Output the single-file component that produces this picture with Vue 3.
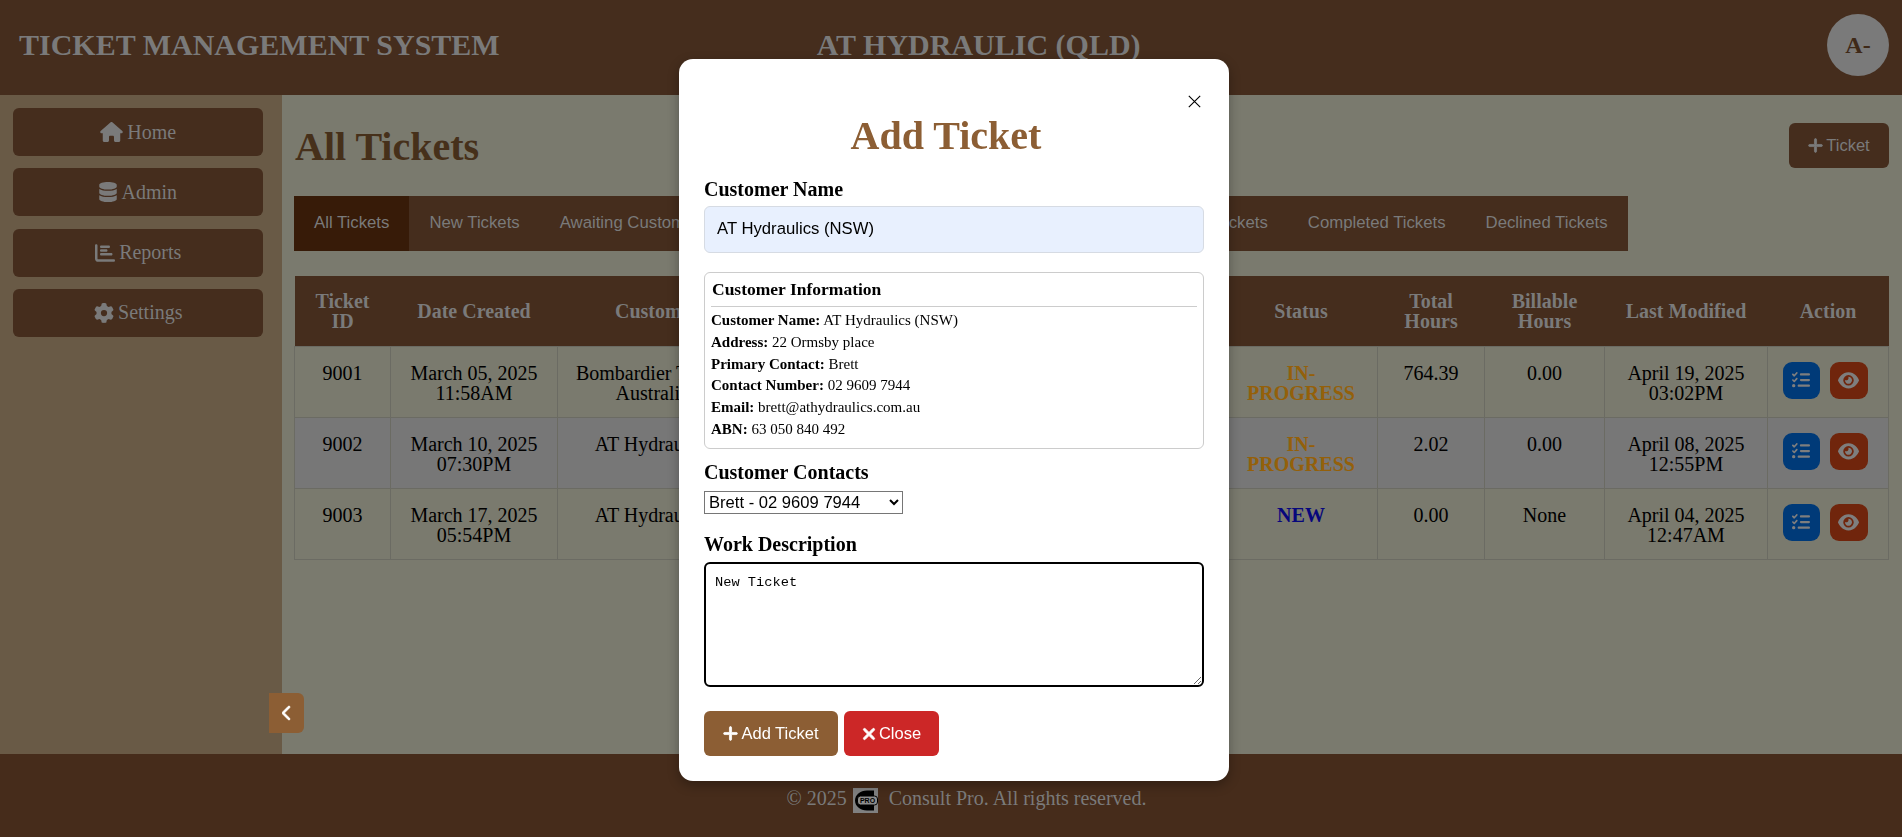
<script setup>
const paths = {
  house: 'M575.8 255.5c0 18-15 32.1-32 32.1h-32l.7 160.2c0 2.7-.2 5.4-.5 8.1V472c0 22.1-17.9 40-40 40H456c-1.1 0-2.2 0-3.3-.1c-1.4 .1-2.8 .1-4.2 .1H416 392c-22.1 0-40-17.9-40-40V448 384c0-17.7-14.3-32-32-32H256c-17.7 0-32 14.3-32 32v64 24c0 22.1-17.9 40-40 40H160 128.1c-1.5 0-3-.1-4.5-.2c-1.2 .1-2.4 .2-3.6 .2H104c-22.1 0-40-17.9-40-40V360c0-.9 0-1.9 .1-2.8V287.6H32c-18 0-32-14-32-32.1c0-9 3-17 10-24L266.4 8c7-7 15-8 22-8s15 2 21 7L564.8 231.5c8 7 12 15 11 24z',
  database: 'M448 73.143v45.714C448 159.143 347.667 192 224 192S0 159.143 0 118.857V73.143C0 32.857 100.333 0 224 0s224 32.857 224 73.143zM448 176v102.857C448 319.143 347.667 352 224 352S0 319.143 0 278.857V176c48.125 33.143 136.208 48.572 224 48.572S399.874 209.143 448 176zm0 160v102.857C448 479.143 347.667 512 224 512S0 479.143 0 438.857V336c48.125 33.143 136.208 48.572 224 48.572S399.874 369.143 448 336z',
  chart: 'M32 32c17.7 0 32 14.3 32 32V400c0 8.8 7.2 16 16 16H480c17.7 0 32 14.3 32 32s-14.3 32-32 32H80c-44.2 0-80-35.8-80-80V64C0 46.3 14.3 32 32 32zm96 64c0-17.7 14.3-32 32-32l192 0c17.7 0 32 14.3 32 32s-14.3 32-32 32l-192 0c-17.7 0-32-14.3-32-32zm32 64l128 0c17.7 0 32 14.3 32 32s-14.3 32-32 32l-128 0c-17.7 0-32-14.3-32-32s14.3-32 32-32zm0 96H416c17.7 0 32 14.3 32 32s-14.3 32-32 32H160c-17.7 0-32-14.3-32-32s14.3-32 32-32z',
  gear: 'M495.9 166.6c3.2 8.7 .5 18.4-6.4 24.6l-43.3 39.4c1.1 8.3 1.7 16.8 1.7 25.4s-.6 17.1-1.7 25.4l43.3 39.4c6.9 6.2 9.6 15.9 6.4 24.6c-4.4 11.9-9.7 23.3-15.8 34.3l-4.7 8.1c-6.6 11-14 21.4-22.1 31.2c-5.9 7.2-15.7 9.6-24.5 6.8l-55.7-17.7c-13.4 10.3-28.2 18.9-44 25.4l-12.5 57.1c-2 9.1-9 16.3-18.2 17.8c-13.8 2.3-28 3.5-42.5 3.5s-28.7-1.2-42.5-3.5c-9.2-1.5-16.2-8.7-18.2-17.8l-12.5-57.1c-15.8-6.5-30.6-15.1-44-25.4L83.1 425.9c-8.8 2.8-18.6 .3-24.5-6.8c-8.1-9.8-15.5-20.2-22.1-31.2l-4.7-8.1c-6.1-11-11.4-22.4-15.8-34.3c-3.2-8.7-.5-18.4 6.4-24.6l43.3-39.4C64.6 273.1 64 264.6 64 256s.6-17.1 1.7-25.4L22.4 191.2c-6.9-6.2-9.6-15.9-6.4-24.6c4.4-11.9 9.7-23.3 15.8-34.3l4.7-8.1c6.6-11 14-21.4 22.1-31.2c5.9-7.2 15.7-9.6 24.5-6.8l55.7 17.7c13.4-10.3 28.2-18.9 44-25.4l12.5-57.1c2-9.1 9-16.3 18.2-17.8C227.3 1.2 241.5 0 256 0s28.7 1.2 42.5 3.5c9.2 1.5 16.2 8.7 18.2 17.8l12.5 57.1c15.8 6.5 30.6 15.1 44 25.4l55.7-17.7c8.8-2.8 18.6-.3 24.5 6.8c8.1 9.8 15.5 20.2 22.1 31.2l4.7 8.1c6.1 11 11.4 22.4 15.8 34.3zM256 336a80 80 0 1 0 0-160 80 80 0 1 0 0 160z',
  plus: 'M256 80c0-17.7-14.3-32-32-32s-32 14.3-32 32V224H48c-17.7 0-32 14.3-32 32s14.3 32 32 32H192V432c0 17.7 14.3 32 32 32s32-14.3 32-32V288H400c17.7 0 32-14.3 32-32s-14.3-32-32-32H256V80z',
  xmark: 'M342.6 150.6c12.5-12.5 12.5-32.8 0-45.3s-32.8-12.5-45.3 0L192 210.7 86.6 105.4c-12.5-12.5-32.8-12.5-45.3 0s-12.5 32.8 0 45.3L146.7 256 41.4 361.4c-12.5 12.5-12.5 32.8 0 45.3s32.8 12.5 45.3 0L192 301.3 297.4 406.6c12.5 12.5 32.8 12.5 45.3 0s12.5-32.8 0-45.3L237.3 256 342.6 150.6z',
  list: 'M152.1 38.2c9.9 8.9 10.7 24 1.8 33.9l-72 80c-4.4 4.9-10.6 7.8-17.2 7.9s-12.9-2.4-17.6-7L7 113C-2.3 103.6-2.3 88.4 7 79s24.6-9.4 33.9 0l22.1 22.1 55.1-61.2c8.9-9.9 24-10.7 33.9-1.8zm0 160c9.9 8.9 10.7 24 1.8 33.9l-72 80c-4.4 4.9-10.6 7.8-17.2 7.9s-12.9-2.4-17.6-7L7 273c-9.4-9.4-9.4-24.6 0-33.9s24.6-9.4 33.9 0l22.1 22.1 55.1-61.2c8.9-9.9 24-10.7 33.9-1.8zM224 96c0-17.7 14.3-32 32-32H480c17.7 0 32 14.3 32 32s-14.3 32-32 32H256c-17.7 0-32-14.3-32-32zm0 160c0-17.7 14.3-32 32-32H480c17.7 0 32 14.3 32 32s-14.3 32-32 32H256c-17.7 0-32-14.3-32-32zM160 416c0-17.7 14.3-32 32-32H480c17.7 0 32 14.3 32 32s-14.3 32-32 32H192c-17.7 0-32-14.3-32-32zM48 368a48 48 0 1 1 0 96 48 48 0 1 1 0-96z',
  eye: 'M288 32c-80.8 0-145.5 36.8-192.6 80.6C48.6 156 17.3 208 2.5 243.7c-3.3 7.9-3.3 16.7 0 24.6C17.3 304 48.6 356 95.4 399.4C142.5 443.2 207.2 480 288 480s145.5-36.8 192.6-80.6c46.8-43.5 78.1-95.4 93-131.1c3.3-7.9 3.3-16.7 0-24.6c-14.9-35.7-46.2-87.7-93-131.1C433.5 68.8 368.8 32 288 32zM144 256a144 144 0 1 1 288 0 144 144 0 1 1 -288 0zm144-64c0 35.3-28.7 64-64 64c-7.1 0-13.9-1.2-20.3-3.3c-5.5-1.8-11.9 1.6-11.7 7.4c.3 6.9 1.3 13.8 3.2 20.7c13.7 51.2 66.4 81.6 117.6 67.9s81.6-66.4 67.9-117.6c-11.1-41.5-47.8-69.4-88.6-71.1c-5.8-.2-9.2 6.1-7.4 11.7c2.1 6.4 3.3 13.2 3.3 20.3z',
  chevron: 'M9.4 233.4c-12.5 12.5-12.5 32.8 0 45.3l192 192c12.5 12.5 32.8 12.5 45.3 0s12.5-32.8 0-45.3L77.3 256 246.6 86.6c12.5-12.5 12.5-32.8 0-45.3s-32.8-12.5-45.3 0l-192 192z'
}

const nav = [
  { label: 'Home', icon: paths.house, vb: '0 0 576 512', w: 23 },
  { label: 'Admin', icon: paths.database, vb: '0 0 448 512', w: 18 },
  { label: 'Reports', icon: paths.chart, vb: '0 0 512 512', w: 20 },
  { label: 'Settings', icon: paths.gear, vb: '0 0 512 512', w: 20 }
]

const tabs = ['All Tickets', 'New Tickets', 'Awaiting Customer Approval', 'Assigned Tickets', 'In-Progress Tickets', 'Closed Tickets', 'Completed Tickets', 'Declined Tickets']

const cols = [96, 167, 254, 138, 138, 137, 153, 107, 120, 163, 121]

const heads = ['Ticket ID', 'Date Created', 'Customer Name', 'Description', 'Assigned To', 'Priority', 'Status', 'Total Hours', 'Billable Hours', 'Last Modified', 'Action']

const rows = [
  { id: '9001', date: ['March 05, 2025', '11:58AM'], customer: 'Bombardier Transportation Australia Pty Ltd', desc: 'Repairs', who: 'Brett', prio: 'High', status: 'IN-PROGRESS', cls: 'progress', total: '764.39', bill: '0.00', mod: ['April 19, 2025', '03:02PM'] },
  { id: '9002', date: ['March 10, 2025', '07:30PM'], customer: 'AT Hydraulics (NSW)', desc: 'Service', who: 'Brett', prio: 'Low', status: 'IN-PROGRESS', cls: 'progress', total: '2.02', bill: '0.00', mod: ['April 08, 2025', '12:55PM'] },
  { id: '9003', date: ['March 17, 2025', '05:54PM'], customer: 'AT Hydraulics (NSW)', desc: 'New Ticket', who: 'Brett', prio: 'Low', status: 'NEW', cls: 'new', total: '0.00', bill: 'None', mod: ['April 04, 2025', '12:47AM'] }
]

const info = [
  ['Customer Name:', 'AT Hydraulics (NSW)'],
  ['Address:', '22 Ormsby place'],
  ['Primary Contact:', 'Brett'],
  ['Contact Number:', '02 9609 7944'],
  ['Email:', 'brett@athydraulics.com.au'],
  ['ABN:', '63 050 840 492']
]
</script>

<template>
  <div class="page">
    <header class="topbar">
      <div class="brand">TICKET MANAGEMENT SYSTEM</div>
      <div class="company">AT HYDRAULIC (QLD)</div>
      <div class="avatar">A-</div>
    </header>

    <div class="middle">
      <aside class="sidebar">
        <a v-for="n in nav" :key="n.label" class="nav-item">
          <svg class="icon" :viewBox="n.vb" :width="n.w" height="20"><path :d="n.icon" /></svg>
          <span>{{ n.label }}</span>
        </a>
      </aside>

      <main class="content">
        <div class="title-row">
          <h1>All Tickets</h1>
          <button class="add-btn">
            <svg class="icon bold" viewBox="0 0 448 512" width="15" height="17"><path :d="paths.plus" /></svg>
            Ticket
          </button>
        </div>

        <nav class="tabs">
          <a v-for="(t, i) in tabs" :key="t" class="tab" :class="{ active: i === 0 }">{{ t }}</a>
        </nav>

        <table class="grid">
          <colgroup>
            <col v-for="(c, i) in cols" :key="i" :style="{ width: c + 'px' }" />
          </colgroup>
          <thead>
            <tr><th v-for="h in heads" :key="h">{{ h }}</th></tr>
          </thead>
          <tbody>
            <tr v-for="r in rows" :key="r.id">
              <td>{{ r.id }}</td>
              <td>{{ r.date[0] }}<br />{{ r.date[1] }}</td>
              <td>{{ r.customer }}</td>
              <td>{{ r.desc }}</td>
              <td>{{ r.who }}</td>
              <td>{{ r.prio }}</td>
              <td class="status" :class="r.cls">{{ r.status }}</td>
              <td>{{ r.total }}</td>
              <td>{{ r.bill }}</td>
              <td>{{ r.mod[0] }}<br />{{ r.mod[1] }}</td>
              <td>
                <div class="actions">
                  <button class="act blue"><svg class="icon" viewBox="0 0 512 512" width="18" height="18"><path :d="paths.list" /></svg></button>
                  <button class="act orange"><svg class="icon" viewBox="0 0 576 512" width="21" height="18.700"><path :d="paths.eye" /></svg></button>
                </div>
              </td>
            </tr>
          </tbody>
        </table>
      </main>
    </div>

    <footer class="footer">
      <span>© 2025</span>
      <svg class="logo" viewBox="0 0 25 25" width="25" height="25">
        <rect width="25" height="25" fill="#808080" />
        <path d="M21 2.500H14C7 2.500 2 7 2 12.500S7 22.500 14 22.500H21Z" fill="#000" />
        <rect x="4.500" y="8" width="20" height="9" rx="3" fill="#8c8c8c" stroke="#000" stroke-width="1" />
        <text x="14.500" y="15" text-anchor="middle" class="logo-text">PRO</text>
      </svg>
      <span>Consult Pro. All rights reserved.</span>
    </footer>

    <button class="collapse">
      <svg class="icon bold" viewBox="0 0 320 512" width="10" height="16"><path :d="paths.chevron" /></svg>
    </button>

    <div class="overlay">
      <section class="modal">
        <button class="close-x" aria-label="Close">
          <svg viewBox="0 0 16 16" width="13" height="13"><path d="M1 1L15 15M15 1L1 15" stroke="#000" stroke-width="1.400" fill="none" /></svg>
        </button>
        <h2>Add Ticket</h2>

        <label class="field-label">Customer Name</label>
        <div class="name-input">AT Hydraulics (NSW)</div>

        <div class="info">
          <h3>Customer Information</h3>
          <p v-for="line in info" :key="line[0]"><strong>{{ line[0] }}</strong> {{ line[1] }}</p>
        </div>

        <label class="field-label contacts">Customer Contacts</label>
        <select class="contact-select">
          <option>Brett - 02 9609 7944</option>
        </select>

        <label class="field-label work">Work Description</label>
        <textarea class="work-text">New Ticket</textarea>

        <div class="modal-actions">
          <button class="m-btn add">
            <svg class="icon bold" viewBox="0 0 448 512" width="15" height="17"><path :d="paths.plus" /></svg>
            Add Ticket
          </button>
          <button class="m-btn cancel">
            <svg class="icon bold" viewBox="0 0 384 512" width="14" height="18"><path :d="paths.xmark" /></svg>
            Close
          </button>
        </div>
      </section>
    </div>
  </div>
</template>

<style scoped>
.page {
  height: 837px;
  display: flex;
  flex-direction: column;
  overflow: hidden;
  font-family: "Liberation Serif", "Times New Roman", serif;
  background: #7a7a6e;
}
.icon { fill: currentColor; display: block; flex: none; }
.icon.bold { stroke: currentColor; stroke-width: 24px; }

.topbar {
  height: 95px;
  flex: none;
  background: #452d1d;
  color: #7a7a7a;
  display: flex;
  align-items: center;
  padding: 0 13px 0 19px;
  font-size: 30px;
  font-weight: bold;
}
.brand { padding-bottom: 5px; }
.company { margin-left: 317px; padding-bottom: 5px; }
.avatar {
  width: 62px;
  height: 62px;
  border-radius: 50%;
  margin: 0 0 5px auto;
  background: #7a7a7a;
  color: #3f2918;
  font-size: 24px;
  display: flex;
  align-items: center;
  justify-content: center;
}

.middle { flex: 1; display: flex; min-height: 0; }
.sidebar {
  width: 282px;
  flex: none;
  background: #695a46;
  padding: 13px 19px 0 13px;
  box-sizing: border-box;
  display: flex;
  flex-direction: column;
  gap: 12.300px;
}
.nav-item {
  height: 48px;
  background: #452d1d;
  border-radius: 6px;
  color: #7a7a7a;
  font-size: 20px;
  display: flex;
  align-items: center;
  justify-content: center;
  gap: 4.500px;
}

.content { flex: 1; padding: 0 13px 0 12px; min-width: 0; }
.title-row {
  height: 101px;
  display: flex;
  align-items: flex-start;
  justify-content: space-between;
  padding-left: 1px;
}
h1 {
  margin: 29px 0 0;
  font-size: 40px;
  font-weight: bold;
  line-height: 46px;
  color: #46301a;
}
.add-btn {
  margin-top: 28px;
  width: 100px;
  height: 45px;
  border: 0;
  border-radius: 6px;
  background: #452d1d;
  color: #7a7a7a;
  font: 16.500px "Liberation Sans", Arial, sans-serif;
  display: flex;
  align-items: center;
  justify-content: center;
  gap: 3px;
  padding: 0;
}

.tabs {
  display: inline-flex;
  background: #452d1d;
  height: 55px;
  vertical-align: top;
}
.tab {
  padding: 0 20px;
  font: 16.750px/54px "Liberation Sans", Arial, sans-serif;
  color: #7a7a7a;
  white-space: nowrap;
}
.tab.active { background: #371b08; }

.grid {
  width: 1594px;
  margin-top: 25px;
  border-collapse: collapse;
  table-layout: fixed;
  font-size: 20px;
  line-height: 20px;
  color: #000;
  text-align: center;
}
th {
  background: #452d1d;
  color: #7a7a7a;
  font-weight: bold;
  height: 70px;
  padding: 0 12px;
  box-sizing: border-box;
}
td {
  border: 1px solid #6b6b63;
  padding: 16px 12px 14px;
  vertical-align: top;
}
tbody tr:nth-child(even) td { background: #777; }
.status { font-weight: bold; }
.progress { color: #94600a; }
.new { color: #07077c; }
.actions { display: flex; justify-content: center; gap: 10px; margin: -1px 0 0 -6px; }
.act {
  width: 37px;
  height: 37px;
  border: 0;
  border-radius: 9px;
  color: #7e7e7e;
  display: flex;
  align-items: center;
  justify-content: center;
  padding: 0;
}
.blue { background: #003a78; }
.orange { width: 38px; background: #70250c; }

.footer {
  height: 83px;
  flex: none;
  background: #462c1b;
  color: #7a7a7a;
  font-size: 20px;
  display: flex;
  justify-content: center;
  align-items: flex-start;
  padding: 33px 0 0 31px;
  box-sizing: border-box;
}
.logo { margin: 1px 11px 0 6px; }
.logo-text { font: bold 7px "Liberation Sans", Arial, sans-serif; fill: #000; }

.collapse {
  position: fixed;
  left: 269px;
  top: 693px;
  width: 35px;
  height: 40px;
  border: 0;
  border-radius: 0 6px 6px 0;
  background: #8c5e34;
  color: #fff;
  display: flex;
  align-items: center;
  justify-content: center;
  padding: 0;
  z-index: 5;
}

.overlay {
  position: fixed;
  inset: 0;
  z-index: 10;
  pointer-events: none;
}
.modal {
  position: absolute;
  left: 679px;
  top: 59px;
  width: 550px;
  height: 722px;
  box-sizing: border-box;
  background: #fff;
  border-radius: 14px;
  padding: 54px 25px 0;
  box-shadow: 0 4px 12px rgba(0, 0, 0, 0.3);
  pointer-events: auto;
}
.close-x {
  position: absolute;
  right: 28px;
  top: 36px;
  width: 13px;
  height: 13px;
  padding: 0;
  border: 0;
  background: none;
  display: block;
}
h2 {
  margin: 0 16px 19px 0;
  text-align: center;
  font-size: 40px;
  line-height: 46px;
  font-weight: bold;
  color: #8c5e34;
}
.field-label {
  display: block;
  font-size: 20px;
  font-weight: bold;
  line-height: 23px;
  color: #000;
}
.name-input {
  margin-top: 5px;
  height: 47px;
  box-sizing: border-box;
  background: #e8f0fe;
  border: 1px solid #d6dbe3;
  border-radius: 6px;
  padding-left: 12px;
  font: 16.700px/43px "Liberation Sans", Arial, sans-serif;
  color: #000;
}
.info {
  margin-top: 19px;
  height: 177px;
  box-sizing: border-box;
  border: 1px solid #ccc;
  border-radius: 6px;
  padding: 6px 6px 0;
  color: #000;
}
h3 {
  margin: 0 0 3px;
  padding: 0 0 7px 1px;
  border-bottom: 1px solid #ccc;
  font-size: 17.500px;
  line-height: 20px;
  font-weight: bold;
}
.info p { margin: 0; font-size: 15px; line-height: 21.800px; }
.contacts { margin-top: 12px; }
.contact-select {
  display: block;
  margin-top: 7px;
  width: 199px;
  height: 23px;
  font: 16.600px "Liberation Sans", Arial, sans-serif;
  background: #fff;
  color: #000;
}
.work { margin-top: 19px; }
.work-text {
  display: block;
  margin-top: 6px;
  width: 500px;
  height: 125px;
  box-sizing: border-box;
  border: 2.500px solid #000;
  border-radius: 6px;
  padding: 11px 9px;
  font: 13.700px "Liberation Mono", monospace;
  color: #000;
  outline: none;
}
.modal-actions { display: flex; gap: 6px; margin-top: 24px; }
.m-btn {
  height: 45px;
  border: 0;
  border-radius: 6px;
  color: #fff;
  font: 16.500px "Liberation Sans", Arial, sans-serif;
  display: flex;
  align-items: center;
  justify-content: center;
  gap: 3px;
  padding: 0;
}
.add { width: 134px; background: #8c5e34; }
.cancel { width: 95px; background: #cc2727; }
</style>
